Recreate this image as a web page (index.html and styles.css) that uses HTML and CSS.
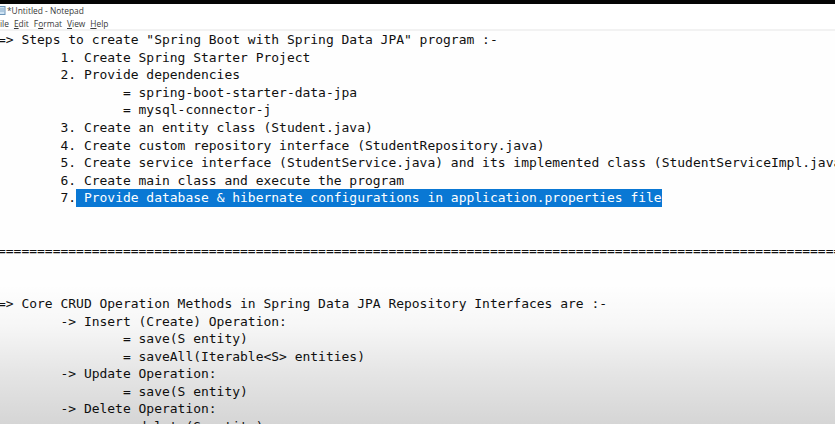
FILE: index.html
```html
<!DOCTYPE html>
<html>
<head>
<meta charset="utf-8">
<title>Untitled - Notepad</title>
<link rel="stylesheet" href="styles.css">
</head>
<body>
<div class="window">
  <div class="topbar"></div>
  <div class="titlebar">
    <svg class="appicon" width="6" height="9" viewBox="0 0 6 9"><rect x="-3" y="0.5" width="8" height="8" fill="#cfe3f3" stroke="#6c94b8" stroke-width="1"/><line x1="-2" y1="3" x2="4" y2="3" stroke="#6c94b8" stroke-width="0.7"/><line x1="-2" y1="5" x2="4" y2="5" stroke="#6c94b8" stroke-width="0.7"/></svg>
    <span class="title">*Untitled - Notepad</span>
  </div>
  <div class="menubar">
    <span class="menu">ile</span>
    <span class="menu"><u>E</u>dit</span>
    <span class="menu">F<u>o</u>rmat</span>
    <span class="menu"><u>V</u>iew</span>
    <span class="menu"><u>H</u>elp</span>
  </div>
  <div class="sep"></div>
<pre class="editor">=> Steps to create "Spring Boot with Spring Data JPA" program :-
        1. Create Spring Starter Project
        2. Provide dependencies
                = spring-boot-starter-data-jpa
                = mysql-connector-j
        3. Create an entity class (Student.java)
        4. Create custom repository interface (StudentRepository.java)
        5. Create service interface (StudentService.java) and its implemented class (StudentServiceImpl.java)
        6. Create main class and execute the program
        7.<span class="sel"> Provide database &amp; hibernate configurations in application.properties file</span>


============================================================================================================================


=> Core CRUD Operation Methods in Spring Data JPA Repository Interfaces are :-
        -> Insert (Create) Operation:
                = save(S entity)
                = saveAll(Iterable&lt;S&gt; entities)
        -> Update Operation:
                = save(S entity)
        -> Delete Operation:
                = delete(S entity)
</pre>
  <div class="shade"></div>
</div>
</body>
</html>
```
FILE: styles.css
```css
html, body {
  margin: 0;
  padding: 0;
  background: #ffffff;
  overflow: hidden;
}
.window {
  position: relative;
  width: 835px;
  height: 424px;
  overflow: hidden;
  display: flex;
  flex-direction: column;
  background: #fefefe;
}
.topbar {
  height: 4px;
  background: #050505;
  flex: none;
}
.titlebar {
  height: 13px;
  flex: none;
  display: flex;
  align-items: center;
  gap: 1px;
  font-family: "Open Sans", "Noto Sans", sans-serif;
  font-size: 8.4px;
  color: #3a3a3a;
  background: #ffffff;
}
.appicon {
  display: block;
  flex: none;
}
.menubar {
  height: 12px;
  flex: none;
  display: flex;
  align-items: center;
  gap: 5px;
  font-family: "Open Sans", "Noto Sans", sans-serif;
  font-size: 8.4px;
  color: #3a3a3a;
  background: #ffffff;
}
.menu u {
  text-decoration-thickness: 0.5px;
  text-underline-offset: 1px;
}
.sep {
  height: 2px;
  flex: none;
  background: #f2f2f2;
}
.editor {
  margin: 0 0 0 -2px;
  padding: 0;
  font-family: "DejaVu Sans Mono", "Liberation Mono", monospace;
  font-size: 12.97px;
  line-height: 17.6px;
  color: #101010;
  white-space: pre;
  flex: none;
}
.sel {
  padding: 1.3px 0;
  background: #0a78d4;
  color: #ffffff;
}
.shade {
  position: absolute;
  left: 0;
  right: 0;
  bottom: 0;
  height: 140px;
  background: linear-gradient(to bottom, rgba(0,0,0,0) 0%, rgba(0,0,0,0.03) 30%, rgba(0,0,0,0.1) 65%, rgba(0,0,0,0.16) 100%);
  pointer-events: none;
}
```
